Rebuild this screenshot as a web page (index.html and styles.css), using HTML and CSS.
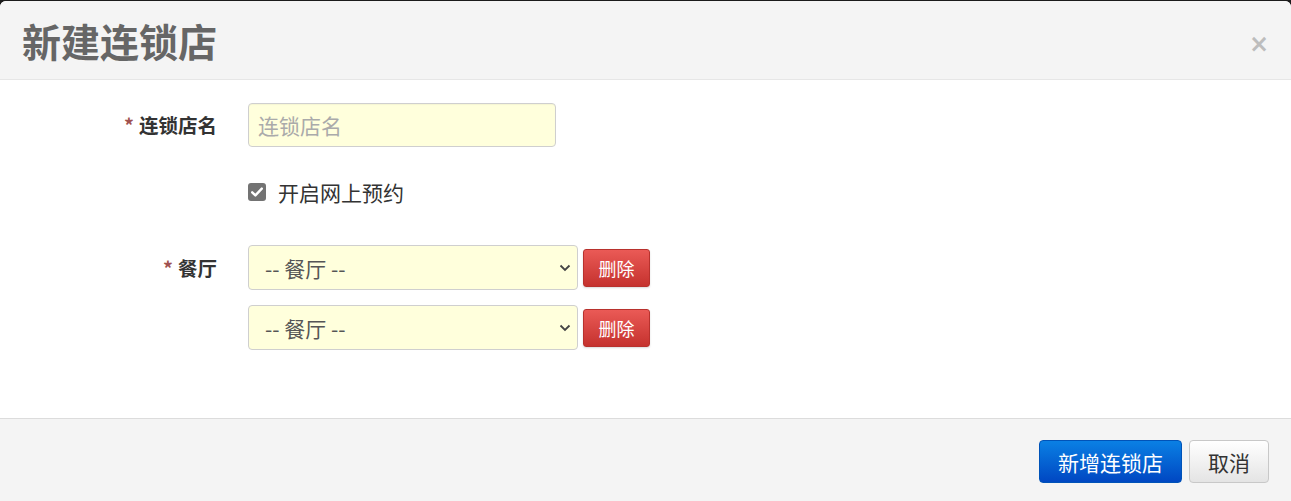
FILE: index.html
```html
<!DOCTYPE html>
<html lang="zh-CN">
<head>
<meta charset="utf-8">
<title>新建连锁店</title>
<link rel="stylesheet" href="styles.css">
</head>
<body>
<div class="modal">
  <div class="modal-header">
    <h1 class="modal-title">新建连锁店</h1>
    <span class="close">×</span>
  </div>
  <div class="modal-body">
    <div class="row row-name">
      <label class="label"><span class="req">*</span>连锁店名</label>
      <div class="control">
        <input class="input" type="text" placeholder="连锁店名">
      </div>
    </div>
    <div class="row row-check">
      <div class="label"></div>
      <div class="control check">
        <span class="checkbox">
          <svg width="18" height="18" viewBox="0 0 18 18"><rect x="0" y="0" width="18" height="18" rx="3" fill="#737373"/><path d="M4.2 9.3 L7.4 12.4 L13.8 5.6" fill="none" stroke="#fff" stroke-width="2.4" stroke-linecap="round" stroke-linejoin="round"/></svg>
        </span>
        <span class="check-text">开启网上预约</span>
      </div>
    </div>
    <div class="row row-rest">
      <label class="label"><span class="req">*</span>餐厅</label>
      <div class="control list">
        <div class="sel-line">
          <div class="select"><span>-- 餐厅 --</span>
            <svg class="chev" width="12" height="8" viewBox="0 0 12 8"><path d="M1.5 1.5 L6 6 L10.5 1.5" fill="none" stroke="#444" stroke-width="1.8"/></svg>
          </div>
          <button class="btn-del">删除</button>
        </div>
        <div class="sel-line">
          <div class="select"><span>-- 餐厅 --</span>
            <svg class="chev" width="12" height="8" viewBox="0 0 12 8"><path d="M1.5 1.5 L6 6 L10.5 1.5" fill="none" stroke="#444" stroke-width="1.8"/></svg>
          </div>
          <button class="btn-del">删除</button>
        </div>
      </div>
    </div>
  </div>
  <div class="modal-footer">
    <button class="btn btn-primary">新增连锁店</button>
    <button class="btn btn-default">取消</button>
  </div>
</div>
</body>
</html>
```
FILE: styles.css
```css
html, body {
  margin: 0;
  padding: 0;
  background: #1b1b1b;
  height: 501px;
  overflow: hidden;
}
body {
  font-family: "Noto Sans CJK SC", "Noto Sans", sans-serif;
  color: #333;
}
.modal {
  margin-top: 1px;
  width: 1291px;
  height: 500px;
  background: #fff;
  border-radius: 6px 6px 0 0;
  display: flex;
  flex-direction: column;
  overflow: hidden;
}
.modal-header {
  height: 78px;
  background: #f4f4f4;
  border-bottom: 1px solid #e6e6e6;
  display: flex;
  align-items: center;
  justify-content: space-between;
  padding: 0 22px 0 22px;
}
.modal-title {
  margin: 0;
  font-size: 39px;
  font-weight: 700;
  color: #666;
  line-height: 1;
}
.close {
  font-family: "DejaVu Sans", sans-serif;
  font-size: 24px;
  font-weight: 700;
  color: #bdbdbd;
  margin-top: 8px;
}
.modal-body {
  flex: 1;
  padding-top: 23px;
}
.row {
  display: flex;
  align-items: flex-start;
}
.label {
  width: 217px;
  flex: none;
  text-align: right;
  font-size: 19.5px;
  font-weight: 700;
  color: #333;
  line-height: 44px;
}
.req {
  color: #a0524f;
  margin-right: 5px;
  font-weight: 700;
}
.control {
  margin-left: 31px;
}
.input {
  box-sizing: border-box;
  width: 308px;
  height: 44px;
  border: 1px solid #cfcfcf;
  border-radius: 4px;
  background: #ffffdc;
  padding: 0 9px;
  font-family: inherit;
  font-size: 21px;
  color: #333;
  outline: none;
  box-shadow: inset 0 1px 1px rgba(0,0,0,0.04);
}
.input::placeholder {
  color: #aaa;
}
.row-name {
  margin-bottom: 23px;
}
.row-check {
  height: 44px;
  margin-bottom: 31px;
}
.check {
  display: flex;
  align-items: center;
  height: 44px;
}
.checkbox {
  display: flex;
  width: 18px;
  height: 18px;
}
.check-text {
  margin-left: 12px;
  font-size: 21px;
  color: #333;
}
.row-rest .label {
  line-height: 45px;
}
.list {
  display: flex;
  flex-direction: column;
  gap: 15px;
}
.sel-line {
  display: flex;
  align-items: center;
  gap: 5px;
}
.select {
  box-sizing: border-box;
  width: 330px;
  height: 45px;
  border: 1px solid #cfcfcf;
  border-radius: 4px;
  background: #ffffdc;
  display: flex;
  align-items: center;
  justify-content: space-between;
  padding: 0 6px 0 16px;
  font-size: 21px;
  color: #555;
}
.btn-del {
  box-sizing: border-box;
  width: 67px;
  height: 38px;
  border: 1px solid #b8312d;
  border-radius: 3px;
  background: linear-gradient(#ea5a56, #c5322e);
  color: #fff;
  font-family: inherit;
  font-size: 18px;
  padding: 0;
  box-shadow: 0 1px 2px rgba(0,0,0,0.15);
}
.modal-footer {
  height: 83px;
  flex: none;
  background: #f4f4f4;
  border-top: 1px solid #dcdcdc;
  display: flex;
  justify-content: flex-end;
  align-items: flex-start;
  padding: 21px 22px 0 0;
  box-sizing: border-box;
  gap: 7px;
}
.btn {
  box-sizing: border-box;
  height: 43px;
  border-radius: 4px;
  font-family: inherit;
  font-size: 21px;
  padding: 0;
}
.btn-primary {
  width: 143px;
  border: 1px solid #0053b8;
  background: linear-gradient(#0a80e4, #0047c2);
  color: #fff;
}
.btn-default {
  width: 80px;
  border: 1px solid #c8c8c8;
  background: linear-gradient(#ffffff, #e4e4e4);
  color: #333;
}
```
